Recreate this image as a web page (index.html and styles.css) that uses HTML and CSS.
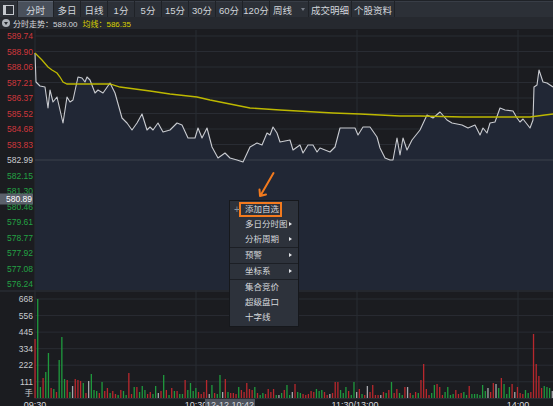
FILE: index.html
```html
<!DOCTYPE html>
<html>
<head>
<meta charset="utf-8">
<meta name="viewport" content="width=device-width, initial-scale=1">
<link rel="stylesheet" href="styles.css">
</head>
<body>

<div class="toolbar">
  <div class="tab tab-icon"><span class="panel-icon"></span></div>
  <div class="tab tab-main active">分时</div>
  <div class="tab">多日</div>
  <div class="tab">日线</div>
  <div class="tab">1分</div>
  <div class="tab">5分</div>
  <div class="tab">15分</div>
  <div class="tab">30分</div>
  <div class="tab">60分</div>
  <div class="tab">120分</div>
  <div class="tab tab-week">周线<span class="caret"></span></div>
  <div class="tab tab-wide">成交明细</div>
  <div class="tab tab-wide">个股资料</div>
  <div class="toolbar-rest"></div>
</div>

<div class="infobar">
  <span class="collapse"></span>
  <span class="info-price">分时走势：589.00</span>
  <span class="info-avg">均线：586.35</span>
</div>

<div class="chart">
  <svg id="chart" width="553" height="377" viewBox="0 29 553 377">
    <g id="grid"></g>
    <polygon class="area" points="35,53 36,82 40,86 45,87 48,108 50,90 53,102 57,97 63,123 67,97 70,102 73,100 78,77 82,78 85,82 87,77 90,80 95,93 98,90 103,93 110,83 115,93 122,118 127,123 132,130 137,123 142,114 147,130 150,127 153,130 158,123 163,132 170,130 177,123 182,125 188,138 195,138 198,128 202,138 207,128 212,147 218,158 225,153 230,158 237,160 243,162 250,147 257,143 262,145 267,133 270,135 273,127 277,133 280,142 290,140 293,150 300,145 303,153 308,145 313,145 317,152 320,148 330,152 335,147 340,128 347,128 355,128 358,135 363,127 370,127 377,137 380,148 385,158 390,160 393,160 397,138 400,155 403,138 407,150 412,140 420,130 427,115 433,118 440,112 447,120 452,123 462,125 468,128 475,125 480,135 483,128 487,133 490,123 495,122 500,108 505,110 513,111 517,118 520,122 523,119 530,128 533,120 534,87 537,85 539,70 543,82 547,83 553,87 553,290 35,290"/>
    <line class="close-line" x1="35" y1="160" x2="553" y2="160"/>
    <polyline class="price" points="35,53 36,82 40,86 45,87 48,108 50,90 53,102 57,97 63,123 67,97 70,102 73,100 78,77 82,78 85,82 87,77 90,80 95,93 98,90 103,93 110,83 115,93 122,118 127,123 132,130 137,123 142,114 147,130 150,127 153,130 158,123 163,132 170,130 177,123 182,125 188,138 195,138 198,128 202,138 207,128 212,147 218,158 225,153 230,158 237,160 243,162 250,147 257,143 262,145 267,133 270,135 273,127 277,133 280,142 290,140 293,150 300,145 303,153 308,145 313,145 317,152 320,148 330,152 335,147 340,128 347,128 355,128 358,135 363,127 370,127 377,137 380,148 385,158 390,160 393,160 397,138 400,155 403,138 407,150 412,140 420,130 427,115 433,118 440,112 447,120 452,123 462,125 468,128 475,125 480,135 483,128 487,133 490,123 495,122 500,108 505,110 513,111 517,118 520,122 523,119 530,128 533,120 534,87 537,85 539,70 543,82 547,83 553,87"/>
    <polyline class="avg" points="35,53 42,60 48,67 52,70 57,73 60,77 63,82 67,84 110,84 120,87 150,91 170,94 197,97 210,100 230,104 250,108 280,110 333,113 360,114 400,116 420,116 463,117 500,117 530,117 545,115 553,114"/>
    <g id="bars"></g>
    <g id="labels"></g>

    <rect class="cross-box" x="0" y="193.5" width="33" height="11"/>
    <text class="cross-text" x="32" y="202">580.89</text>

    <text class="time" x="35" y="408" text-anchor="middle">09:30</text>
    <text class="time" x="196" y="408" text-anchor="middle">10:30</text>
    <rect class="time-box" x="205" y="399" width="50" height="9"/>
    <text class="time time-hl" x="230" y="408" text-anchor="middle">12-12 10:42</text>
    <text class="time" x="355" y="408" text-anchor="middle">11:30/13:00</text>
    <text class="time" x="518" y="408" text-anchor="middle">14:00</text>
  </svg>

  <svg class="pointer" width="26" height="32" viewBox="0 0 26 32">
    <path d="M19.5 5 L6.5 27.5 M5.5 21.5 L6 28 L12 26.5" />
  </svg>

  <ul class="menu">
    <li class="menu-item current"><span class="plus">+</span><span class="label">添加自选</span></li>
    <li class="menu-item sub">多日分时图</li>
    <li class="menu-item sub">分析周期</li>
    <li class="sep"></li>
    <li class="menu-item sub">预警</li>
    <li class="sep"></li>
    <li class="menu-item sub">坐标系</li>
    <li class="sep"></li>
    <li class="menu-item">集合竞价</li>
    <li class="menu-item">超级盘口</li>
    <li class="menu-item">十字线</li>
  </ul>
</div>

<script>
var NS = 'http://www.w3.org/2000/svg';

function add(parent, tag, attrs, text) {
  var node = document.createElementNS(NS, tag);
  for (var k in attrs) node.setAttribute(k, attrs[k]);
  if (text) node.textContent = text;
  document.getElementById(parent).appendChild(node);
  return node;
}

// сетка
var prices = ['589.74','588.90','588.06','587.21','586.37','585.52','584.68','583.83','582.99',
              '582.15','581.30','580.46','579.61','578.77','577.92','577.08','576.24'];
var vols = ['668','556','445','334','222','111'];

prices.forEach(function(p, i) {
  var y = 36 + i * 15.5;
  if (i != 8) add('grid', 'line', {x1: 35, y1: y, x2: 553, y2: y, 'class': 'grid-line'});
  var cls = i < 8 ? 'lbl-up' : (i == 8 ? 'lbl-flat' : 'lbl-down');
  add('labels', 'text', {x: 33, y: y + 3, 'class': 'axis ' + cls}, p);
});

add('grid', 'line', {x1: 0, y1: 291, x2: 553, y2: 291, 'class': 'split-line'});

vols.forEach(function(v, i) {
  var y = 299 + i * 16.55;
  add('grid', 'line', {x1: 35, y1: y, x2: 553, y2: y, 'class': 'grid-line'});
  add('labels', 'text', {x: 33, y: y + 3, 'class': 'axis lbl-flat'}, v);
});
add('labels', 'text', {x: 33, y: 396, 'class': 'axis lbl-flat'}, '手');
add('grid', 'line', {x1: 35, y1: 398.5, x2: 553, y2: 398.5, 'class': 'grid-line'});

[35, 196, 357, 518].forEach(function(x) {
  add('grid', 'line', {x1: x, y1: 30, x2: x, y2: 399, 'class': 'grid-line'});
});

// объём
var known = {
  0:['r',59], 1:['g',99], 2:['g',11], 3:['r',20], 4:['g',26], 5:['g',45], 6:['r',10], 7:['g',9],
  8:['r',6], 9:['g',38], 10:['g',61], 11:['g',19], 12:['r',18], 13:['g',6], 14:['w',12], 15:['r',19],
  16:['r',18], 17:['r',17], 18:['g',15], 19:['r',5], 20:['w',17], 21:['g',24], 22:['g',8],
  25:['g',16], 35:['r',25], 48:['g',23], 56:['r',18], 58:['g',15], 64:['r',18], 69:['g',23],
  71:['r',19], 79:['r',15], 112:['r',16], 113:['r',16], 133:['g',16], 144:['r',18], 145:['r',34],
  146:['r',9], 149:['g',13], 150:['r',14], 169:['w',10], 171:['r',15], 174:['r',20], 175:['g',14],
  186:['r',64], 187:['r',34], 188:['r',22], 189:['r',10], 190:['g',12], 191:['g',11], 192:['g',10], 193:['w',7]
};
var seed = 11;
function rnd() { seed = (seed * 9301 + 49297) % 233280; return seed / 233280; }

for (var i = 0; i < 194; i++) {
  var c, h;
  if (known[i]) { c = known[i][0]; h = known[i][1]; }
  else {
    var r = rnd();
    c = r < 0.06 ? 'w' : (r < 0.55 ? 'r' : 'g');
    h = 3 + Math.round(rnd() * rnd() * 14);
  }
  var x = 35 + i * 2.68;
  add('bars', 'rect', {x: (x - 0.6).toFixed(2), y: 398 - h, width: 1.3, height: h, 'class': 'bar-' + c});
}
</script>

</body>
</html>
```

FILE: styles.css
```css
* {
  box-sizing: border-box;
}

body {
  margin: 0;
  width: 553px;
  height: 406px;
  overflow: hidden;
  background-color: #1b1c20;
  font-family: "Liberation Sans", "Noto Sans CJK SC", sans-serif;
  color: #d2d6db;
}

.toolbar {
  display: flex;
  gap: 1px;
  height: 17px;
  padding-top: 1px;
  background-color: #1f2227;
}

.tab {
  width: 26px;
  height: 16px;
  display: flex;
  align-items: center;
  justify-content: center;
  background-color: #2c3037;
  border-top: 1px solid #383d46;
  font-size: 9.5px;
  color: #d2d6db;
}

.tab-icon {
  width: 17px;
}

.panel-icon {
  width: 11px;
  height: 10px;
  border: 1px solid #c4c8ce;
  border-left-width: 3px;
}

.tab-main {
  width: 35px;
}

.tab.active {
  background-color: #49505b;
  border-top-color: #5e6673;
}

.tab-week {
  width: 38px;
  justify-content: flex-start;
  padding-left: 3px;
  gap: 9px;
}

.caret {
  border-top: 3px solid #7a808a;
  border-left: 2.5px solid transparent;
  border-right: 2.5px solid transparent;
}

.tab-wide {
  width: 42px;
}

.toolbar-rest {
  flex: 1;
  background-color: #2c3037;
  border-top: 1px solid #383d46;
}

.infobar {
  display: flex;
  align-items: center;
  height: 12px;
  padding-left: 2px;
  background-color: #26292f;
  font-size: 8px;
}

.collapse {
  width: 8px;
  height: 8px;
  border-radius: 50%;
  background-color: #aeb3ba;
  position: relative;
  margin-right: 3px;
}

.collapse::after {
  content: "";
  position: absolute;
  left: 1.5px;
  top: 2.5px;
  border-top: 3.5px solid #26292f;
  border-left: 2.5px solid transparent;
  border-right: 2.5px solid transparent;
}

.info-price {
  color: #d6d8dc;
  margin-right: 5px;
}

.info-avg {
  color: #d8d000;
}

.chart {
  position: relative;
}

#chart {
  display: block;
}

.grid-line {
  stroke: #292c33;
  stroke-width: 1;
}

.split-line {
  stroke: #2f333a;
  stroke-width: 1;
}

.close-line {
  stroke: #3d434d;
  stroke-width: 1.2;
}

.area {
  fill: #212735;
}

.price {
  fill: none;
  stroke: #c9cbd0;
  stroke-width: 1.1;
  stroke-linejoin: round;
}

.avg {
  fill: none;
  stroke: #bdb800;
  stroke-width: 1.3;
}

.axis {
  font-size: 8.5px;
  text-anchor: end;
}

.lbl-up {
  fill: #cf373c;
}

.lbl-flat {
  fill: #c9cbcf;
}

.lbl-down {
  fill: #23a244;
}

.bar-r {
  fill: #b8282d;
}

.bar-g {
  fill: #1f9a3d;
}

.bar-w {
  fill: #a5a7ab;
}

.cross-box {
  fill: #5a606a;
}

.cross-text {
  font-size: 8.5px;
  fill: #ffffff;
  text-anchor: end;
}

.time {
  font-size: 9px;
  fill: #d6d8dc;
}

.time-box {
  fill: #4d535d;
}

.pointer {
  position: absolute;
  left: 254px;
  top: 139px;
}

.pointer path {
  fill: none;
  stroke: #f27a1e;
  stroke-width: 2;
  stroke-linecap: round;
  stroke-linejoin: round;
}

.menu {
  position: absolute;
  left: 229px;
  top: 171px;
  width: 70px;
  margin: 0;
  padding: 1px 0;
  list-style: none;
  background-color: #2d323b;
  border: 1px solid #16181c;
  font-size: 8.5px;
  color: #d5d8dc;
}

.menu-item {
  position: relative;
  height: 15px;
  line-height: 15px;
  padding-left: 15px;
  white-space: nowrap;
}

.menu-item.sub::after {
  content: "";
  position: absolute;
  right: 6px;
  top: 5px;
  border-left: 3px solid #e2e4e8;
  border-top: 2.5px solid transparent;
  border-bottom: 2.5px solid transparent;
}

.plus {
  position: absolute;
  left: 4px;
  color: #8a9099;
  font-size: 10px;
}

.current .label {
  display: inline-block;
  height: 15px;
  line-height: 11px;
  margin-left: -6px;
  padding: 0 1px 0 4px;
  border: 2px solid #f27a1e;
}

.sep {
  height: 1px;
  background-color: #1c1f25;
}
```
